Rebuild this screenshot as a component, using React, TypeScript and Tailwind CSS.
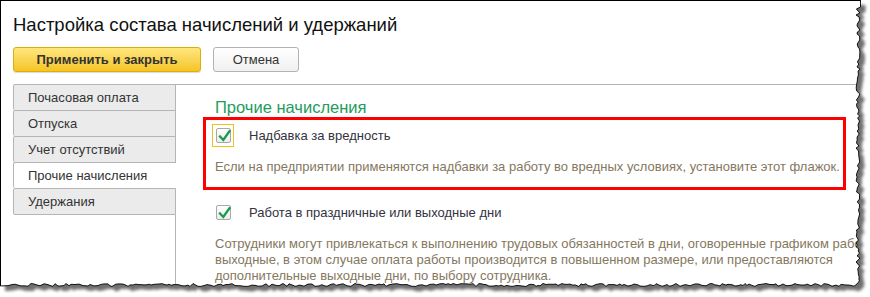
import { useMemo } from "react";

const tabs = [
  "Почасовая оплата",
  "Отпуска",
  "Учет отсутствий",
  "Прочие начисления",
  "Удержания",
];

const makeEdge = () => {
  let s = 12345;
  const r = () => {
    s = (s * 16807) % 2147483647;
    return s / 2147483647;
  };
  const pts: [number, number][] = [
    [860.5, 0],
    [860.5, 7],
  ];
  for (let y = 9; y < 283; y += 2 + Math.floor(r() * 3)) pts.push([856 + r() * 4, y]);
  pts.push([857, 284]);
  for (let x = 854; x > 4; x -= 2 + Math.floor(r() * 3)) pts.push([x, 283.5 + r() * 3]);
  pts.push([0.5, 286]);
  return pts;
};

const Check = () => (
  <svg width="15" height="15" viewBox="0 0 15 15" className="absolute left-0 top-0">
    <path d="M3 7.5 L6.3 11 L12.5 2.2" fill="none" stroke="#1c9a4b" strokeWidth="2.3" strokeLinecap="square" />
  </svg>
);

const CheckBox = () => (
  <div className="relative shrink-0 w-[15px] h-[15px] border border-[#a8a8a8] rounded-[2px] bg-gradient-to-b from-white to-[#ececec]">
    <Check />
  </div>
);

const TornEdge = () => {
  const pts = useMemo(makeEdge, []);
  const line = pts.map((p, i) => `${i ? "L" : "M"}${p[0].toFixed(1)},${p[1].toFixed(1)}`).join(" ");
  const shape = `M0,0 ${line.slice(1)} L0,286 Z`;
  const outside = `M0,0 H870 V297 H0 Z ${shape}`;
  return (
    <svg width="870" height="297" className="absolute left-0 top-0 pointer-events-none">
      <defs>
        <clipPath id="out">
          <path d={outside} clipRule="evenodd" />
        </clipPath>
        <filter id="blur" x="-5%" y="-5%" width="110%" height="110%">
          <feGaussianBlur stdDeviation="1.6" />
        </filter>
      </defs>
      <path d={outside} fill="#ffffff" fillRule="evenodd" />
      <g clipPath="url(#out)">
        <path d={shape} transform="translate(5,5)" fill="#6f6f6f" filter="url(#blur)" />
      </g>
      <path d={line} fill="none" stroke="#000000" strokeWidth="0.9" />
    </svg>
  );
};

export default function App() {
  return (
    <div className="relative w-[870px] h-[297px] bg-white overflow-hidden font-['Liberation_Sans',Arial,sans-serif]">
      <div className="w-[870px] h-[297px] border-l border-t border-black pl-[12px] pt-[12px] flex flex-col">
        <h1 className="h-[23px] leading-[23px] text-[18.5px] text-[#111111] whitespace-nowrap">
          Настройка состава начислений и удержаний
        </h1>
        <div className="flex gap-[12px] mt-[11px]">
          <button className="w-[188px] h-[25px] rounded-[3px] border border-[#dcae10] bg-gradient-to-b from-[#ffe67a] to-[#f5c51c] text-[13px] font-bold text-[#333333] shadow-[0_1px_1px_rgba(0,0,0,0.15)]">
            Применить и закрыть
          </button>
          <button className="w-[86px] h-[25px] rounded-[3px] border border-[#b3b3b3] bg-gradient-to-b from-white to-[#f0f0f0] text-[13px] text-[#333333]">
            Отмена
          </button>
        </div>
        <div className="flex mt-[12px] flex-1 min-w-0">
          <div className="w-[163px] shrink-0 flex flex-col">
            {tabs.map((t, i) => {
              const active = i === 3;
              return (
                <div
                  key={t}
                  className={
                    active
                      ? "h-[26px] border-t border-l border-[#b5b5b5] rounded-tl-[2px] rounded-bl-[2px] bg-white pl-[14px] flex items-center text-[13px] text-[#333333] whitespace-nowrap"
                      : i === 4
                      ? "h-[27px] border border-[#b5b5b5] rounded-tl-[2px] rounded-bl-[2px] bg-[#ebebeb] pl-[14px] flex items-center text-[13px] text-[#333333] whitespace-nowrap"
                      : "h-[26px] border-t border-l border-r border-[#b5b5b5] rounded-tl-[2px] rounded-bl-[2px] bg-[#ebebeb] pl-[14px] flex items-center text-[13px] text-[#333333] whitespace-nowrap"
                  }
                >
                  {t}
                </div>
              );
            })}
            <div className="flex-1 border-r border-[#b5b5b5]" />
          </div>
          <div className="flex-1 min-w-0 border-t border-[#b5b5b5] pt-[12px]">
            <div className="pl-[39px] h-[20px] leading-[20px] text-[16.5px] text-[#239c5c] whitespace-nowrap">Прочие начисления</div>
            <div className="ml-[27px] w-[643px] h-[73px] border-[3px] border-[#ff0000] pt-[4px] pl-[6px]">
              <div className="flex items-center h-[23px]">
                <div className="w-[22px] h-[23px] shrink-0 border border-[#f2c01e] p-[3px] flex items-center justify-center">
                  <CheckBox />
                </div>
                <span className="ml-[15px] text-[13px] text-[#333340] whitespace-nowrap">Надбавка за вредность</span>
              </div>
              <div className="mt-[12px] pl-[3px] leading-[16px] text-[13px] text-[#857760] whitespace-nowrap">
                Если на предприятии применяются надбавки за работу во вредных условиях, установите этот флажок.
              </div>
            </div>
            <div className="flex items-center h-[15px] mt-[15px] pl-[40px]">
              <CheckBox />
              <span className="ml-[18px] text-[13px] text-[#333340] whitespace-nowrap">Работа в праздничные или выходные дни</span>
            </div>
            <div className="mt-[16px] pl-[39px] leading-[16px] text-[13px] text-[#857760] whitespace-nowrap">
              Сотрудники могут привлекаться к выполнению трудовых обязанностей в дни, оговоренные графиком работы
              <br />
              выходные, в этом случае оплата работы производится в повышенном размере, или предоставляются
              <br />
              дополнительные выходные дни, по выбору сотрудника.
            </div>
          </div>
        </div>
      </div>
      <TornEdge />
    </div>
  );
}
